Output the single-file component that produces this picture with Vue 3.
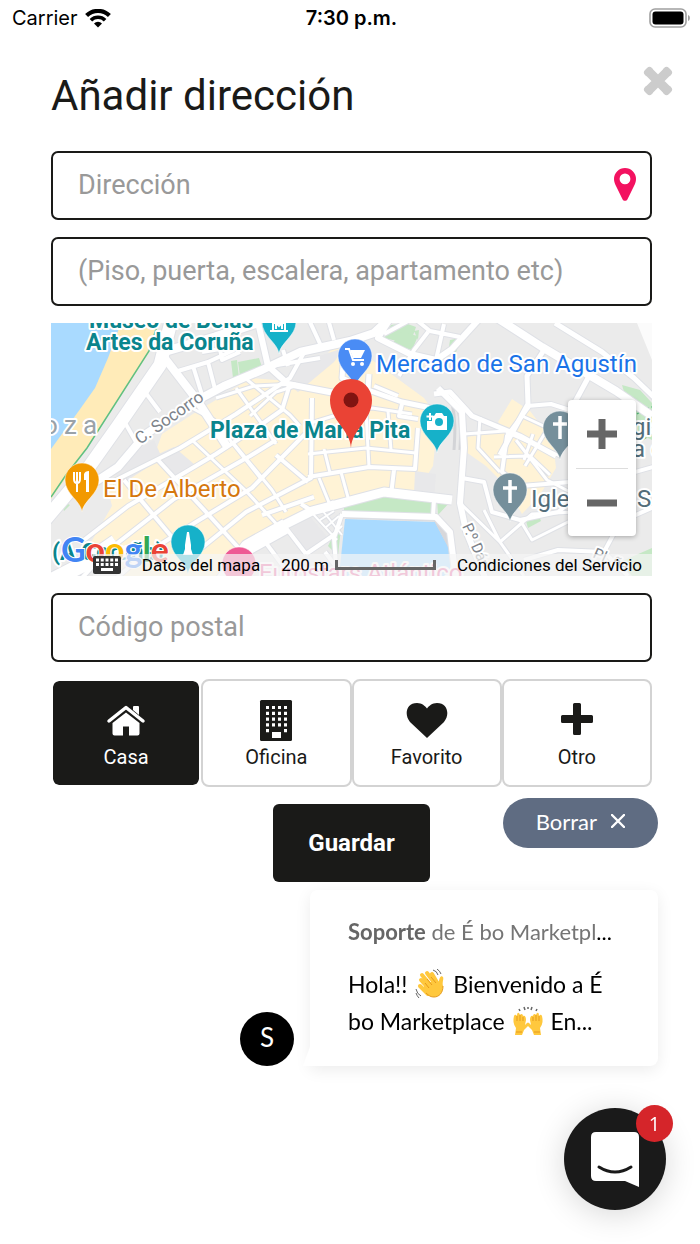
<script setup>
import { ref } from "vue";

const address = ref("");
const details = ref("");
const postcode = ref("");
const selected = ref("casa");
const showMessage = ref(true);

const types = [
  { id: "casa", label: "Casa" },
  { id: "oficina", label: "Oficina" },
  { id: "favorito", label: "Favorito" },
  { id: "otro", label: "Otro" },
];

// streets of the map, w is the width of the white part
const roads = [
  { w: 13, d: "M172 318L160 365L118 426L84 474L45 520" },
  { w: 9, d: "M163 352L215 337L260 322" },
  { w: 8, d: "M160 352L197 400L228 448" },
  { w: 8, d: "M80 492L118 467L146 434L194 402L224 386L262 370L300 352L350 341L374 333L392 316" },
  { w: 4, d: "M142 388L160 412M124 421L136 442" },
  { w: 4, d: "M178 371L208 362L234 350M193 366L203 398M208 362L215 389M202 352L220 349L222 360L240 352" },
  { w: 6, d: "M257 318L268 366L288 384L345 395" },
  { w: 4, d: "M283 350L288 366M277 365L320 358M310 322L322 348M328 319L334 340" },
  { w: 4, d: "M112 482L180 448L236 414L290 378L306 349" },
  { w: 3, d: "M236 388L262 424L276 444M245 378L290 415L300 426" },
  { w: 3, d: "M188 406L214 420L238 450L262 480" },
  { w: 3, d: "M216 398L254 386L296 384M250 416L276 392L295 386" },
  { w: 4, d: "M290 384L282 410L262 424L216 454L128 506L84 540" },
  { w: 4, d: "M276 440L250 456L174 499L106 552L80 580" },
  { w: 4, d: "M305 434L252 488L196 522L142 556L112 582" },
  { w: 4, d: "M158 460L206 512L246 556M124 480L166 530L196 566" },
  { w: 3, d: "M192 440L246 491L282 530M234 444L272 490L286 512" },
  { w: 4, d: "M312 398L311 478L246 512L198 551M276 455L308 482" },
  { w: 3, d: "M304 425L340 414L372 408L412 414M308 454L366 448L416 453" },
  { w: 3, d: "M324 449L330 473M366 412L369 467M388 411L391 450" },
  { w: 4, d: "M308 477L369 467L415 469L418 428M394 470L391 495" },
  { w: 3, d: "M319 478L330 505M341 472L349 501M342 382L342 414" },
  { w: 5, d: "M344 352L342 378L368 390L402 402L431 408M369 374L368 390" },
  { w: 4, d: "M402 404L399 416L418 419M374 386L398 396" },
  { w: 15, d: "M45 584L84 564L116 542M216 590L248 547L286 526" },
  { w: 9, d: "M278 528L312 511L384 492L452 500" },
  { w: 4, d: "M301 504L312 511L334 502M262 515L314 497M286 528L306 554M306 554L334 535M325 552L340 572M266 543L292 578" },
  { w: 2, d: "M313 514L337 540M322 510L342 535M320 520L334 511M325 528L339 516M331 536L342 526" },
  { w: 6, d: "M342 514L436 517L450 532L456 580" },
  { w: 4, d: "M342 514L334 538L337 580M434 500L433 517" },
  { w: 6, d: "M392 316L378 338L410 354L436 360L452 349L482 316" },
  { w: 4, d: "M384 334L408 321M414 318L430 331L460 337M428 332L414 350L399 376M444 324L436 360" },
  { w: 8, d: "M494 316L542 347L616 391L652 416" },
  { w: 5, d: "M555 323L602 352L634 378L659 402M544 350L527 376L528 404L500 455" },
  { w: 5, d: "M588 378L575 402M434 394L450 392L472 416L520 436L556 456" },
  { w: 6, d: "M438 388L462 412L464 448L460 503L466 531L486 580" },
  { w: 4, d: "M527 406L551 404L576 412M530 405L507 436L502 472L521 486L570 482" },
  { w: 3, d: "M480 417L478 448L500 472M464 434L505 431M506 432L560 456M520 415L548 428L525 466M494 457L530 456L550 475M516 440L547 480L574 494M533 434L524 460" },
  { w: 4, d: "M462 478L484 482L492 512L520 520L558 512L596 483L660 465" },
  { w: 3, d: "M484 510L500 542L532 514L576 512M460 503L500 542L524 576M520 520L532 540L580 516" },
  { w: 4, d: "M524 560L558 550L604 552L628 576M604 552L620 522L656 506M600 483L612 518" },
];

const pin = "M0 0C-1-11-17-18-17-32a17 17 0 0 1 34 0C17-18 1-11 0 0Z";
</script>

<template>
  <header class="status">
    <div class="carrier">
      Carrier
      <svg width="26" height="19" viewBox="0 0 26 19" aria-hidden="true">
        <path d="M1.600 6.600a16.200 16.200 0 0 1 22.800 0" fill="none" stroke="#000" stroke-width="4.200" />
        <path d="M5.900 11.200a10.100 10.100 0 0 1 14.200 0" fill="none" stroke="#000" stroke-width="3.600" />
        <path d="M9 14.400a5.700 5.700 0 0 1 8 0l-4 4z" />
      </svg>
    </div>
    <div class="time">7:30 p.m.</div>
    <svg class="battery" width="42" height="20" viewBox="0 0 42 20" aria-hidden="true">
      <rect x="1" y="1" width="36" height="18" rx="5" fill="#fff" stroke="#a0a0a0" stroke-width="1.600" />
      <rect x="3.500" y="3.500" width="31" height="13" rx="3" />
      <path d="M39 7c2.500.5 2.500 5.500 0 6z" fill="#a0a0a0" />
    </svg>
  </header>

  <main class="page">
    <div class="heading">
      <h1>Añadir dirección</h1>
      <button class="close" type="button" aria-label="Cerrar">
        <svg width="30" height="30" viewBox="0 0 30 30">
          <path d="M5.500 5.500l19 19M24.500 5.500l-19 19" stroke="#ccc" stroke-width="9.500" />
          <path d="M4.500 6.500l2-2M23.500 4.500l2 2M4.500 23.500l2 2M23.500 25.500l2-2" stroke="#ccc" stroke-width="7" stroke-linecap="round" />
        </svg>
      </button>
    </div>

    <form class="form" @submit.prevent>
      <div class="field">
        <input v-model="address" type="text" placeholder="Dirección" aria-label="Dirección" />
        <svg width="22" height="33" viewBox="0 0 22 33" aria-hidden="true">
          <path
            d="M11 0a11 11 0 0 1 11 11c0 3-1 4.800-2 7l-6.500 13.200c-1 2-4 2-5 0L2 18c-1-2.200-2-4-2-7A11 11 0 0 1 11 0zm0 5.500a5.400 5.400 0 1 0 0 10.800 5.400 5.400 0 0 0 0-10.800z"
            fill="#f31260"
          />
        </svg>
      </div>
      <div class="field">
        <input
          v-model="details"
          type="text"
          placeholder="(Piso, puerta, escalera, apartamento etc)"
          aria-label="(Piso, puerta, escalera, apartamento etc)"
        />
      </div>

      <div class="map">
        <svg class="canvas" viewBox="51 323 601 253" preserveAspectRatio="xMidYMid slice">
          <rect x="51" y="323" width="601" height="253" fill="#ebebeb" />
          <path d="M51 323H158L150 351L88 447L51 499z" fill="#ffebb8" />
          <path d="M51 323H121L108 358L95 388L78 412L51 449z" fill="#a9daff" />
          <path d="M158 323L149 351L87 448L66 475L51 497" fill="none" stroke="#5fc083" stroke-width="1.500" />

          <g fill="#fff3d6">
            <path d="M162 434L196 412L224 395L250 378L300 382L322 360L336 344L348 350L372 360L424 398L438 418L433 466L418 490L382 491L312 508L280 524L244 546L218 576H120L90 544L112 506L106 482L154 456z" />
            <path d="M512 399L530 411L540 424L552 434L556 468L540 495L522 514L506 486L486 466L466 452V437L506 432L498 422z" />
            <path d="M92 532L120 508L134 520L108 548z" />
          </g>
          <g fill="#e8e8ea">
            <path d="M110 466L154 440L162 458L122 484zM288 524L308 514L330 540L306 552zM154 456L174 447L194 464L174 478z" />
            <path d="M300 362L344 348L334 362L298 392L288 384zM415 471L436 474L434 500L414 494z" />
          </g>
          <g fill="#c5e8c5">
            <path d="M231 361L237 360L239 378L233 378zM238 362L259 358L262 367L240 376z" />
            <path d="M391 325L405 323L416 327L410 344L384 338zM414 331L419 330L418 340z" />
            <path d="M401 332L418 336L412 350L392 344zM450 340L462 338L456 352L448 355z" />
            <path d="M344 506L380 496L432 501V515L344 512zM437 500L450 502L438 515z" />
            <path d="M622 385L640 390L652 403V440L636 432zM526 521L538 514L541 521L528 528z" />
            <path d="M328 546L342 518L338 556zM620 562L652 548V576H632zM60 500L70 505L64 511z" />
          </g>
          <path d="M345 519L435 522L450 550V576H339z" fill="#a9daff" />
          <path d="M346 516L436 519L454 553" fill="none" stroke="#d7d7da" stroke-width="5" />
          <path d="M451 394C458 404 462 416 460 450M452 403C456 420 455 434 454 450" fill="none" stroke="#d3d4d7" stroke-width="3" />
          <path d="M637 323H652V360z" fill="#fbfbfb" />
          <path d="M637 414q8-6 15-7M642 440l10-6" stroke="#55b77b" stroke-width="1.500" stroke-dasharray="5 3" fill="none" />

          <g fill="none" stroke-linejoin="round">
            <path v-for="(r, i) in roads" :key="'c' + i" :d="r.d" stroke="#dfe1e6" :stroke-width="r.w + 2" />
            <path v-for="(r, i) in roads" :key="'r' + i" :d="r.d" stroke="#fff" :stroke-width="r.w" />
          </g>

          <!-- street and area names -->
          <g class="names" fill="#7d838a">
            <text transform="translate(140 445) rotate(-35)" font-size="17">C. Socorro</text>
            <text transform="translate(462 526) rotate(66)" font-size="15">P.º Dár</text>
            <text transform="translate(592 557) rotate(24)" font-size="15">Pl. ña</text>
            <text x="43 64 83" y="434" font-size="26" fill="#9aa2a8">oza</text>
          </g>

          <!-- places -->
          <g class="names">
            <g class="strong" fill="#0a858d" font-size="23">
              <text x="89" y="328">Museo de Belas</text>
              <text x="86" y="350">Artes da Coruña</text>
              <text x="210" y="438">Plaza de María Pita</text>
              <text x="52" y="560">(A Coruña)</text>
            </g>
            <text x="376" y="372" font-size="24" fill="#1a73e8">Mercado de San Agustín</text>
            <text x="103" y="497" font-size="24" fill="#d5770d">El De Alberto</text>
            <text x="259" y="581" font-size="24" fill="#e8609a">Eurostars Atlántico</text>
            <g fill="#536d7a" font-size="24">
              <text x="531" y="507">Igle</text>
              <text x="637" y="507">S</text>
              <text x="632" y="435">gia</text>
              <text x="632" y="457">a c</text>
            </g>
          </g>

          <g stroke="#fff" stroke-opacity=".5">
            <path :d="pin" transform="translate(279 354)" fill="#16b1c9" />
            <path :d="pin" transform="translate(355 388)" fill="#4a8cf5" />
            <path :d="pin" transform="translate(437 453)" fill="#16b1c9" />
            <path :d="pin" transform="translate(82 512)" fill="#f29900" />
            <path :d="pin" transform="translate(560 460)" fill="#758f9b" />
            <path :d="pin" transform="translate(510 522)" fill="#758f9b" />
            <path :d="pin" transform="translate(188 574)" fill="#16b1c9" />
            <path :d="pin" transform="translate(239 596)" fill="#ee5a94" />
          </g>
          <g fill="none" stroke="#fff" stroke-width="2">
            <path d="M270 331h18M273 330v-7h12v7M276 329v-6l3 3 3-3v6" />
            <path d="M345 349h4l4 11h11" />
            <path d="M560 416v23M553 424h14M510 480v23M503 488h14" stroke-width="3.500" />
            <path d="M74 472v7q0 4 3 4t3-4v-7M77 472v20" />
            <path d="M430 413v7M426.500 416.500h7" />
          </g>
          <g fill="#fff">
            <path d="M350 350h15l-4 8h-8z" />
            <circle cx="353" cy="364" r="2" />
            <circle cx="362" cy="364" r="2" />
            <path d="M86 492V480h-2v-6q1-3 5-3v21z" />
            <path d="M434 416l2-3h6l2 3h3v14h-20v-9h5v-5z" />
            <path d="M187 532h2l2 13v4l2 6h-10l2-6v-4z" />
          </g>
          <circle cx="439" cy="422" r="4" fill="#16b1c9" />

          <!-- selected position -->
          <path d="M351 448c-1-19-21-27-21-48a21 21 0 0 1 42 0c0 21-20 29-21 48z" fill="#ea4335" />
          <circle cx="351" cy="400" r="7.500" fill="#811411" />

          <text class="google" x="61" y="562" font-size="34">
            <tspan fill="#4285f4">G</tspan><tspan fill="#ea4335">o</tspan><tspan fill="#fbbc05">o</tspan><tspan fill="#4285f4">g</tspan><tspan fill="#34a853">l</tspan><tspan fill="#ea4335">e</tspan>
          </text>
        </svg>

        <div class="zoom">
          <button type="button" aria-label="Acercar">
            <svg width="32" height="32" viewBox="0 0 32 32"><path d="M16 1v30M1 16h30" stroke="#666" stroke-width="7" /></svg>
          </button>
          <button type="button" aria-label="Alejar">
            <svg width="32" height="32" viewBox="0 0 32 32"><path d="M1 16h30" stroke="#666" stroke-width="7" /></svg>
          </button>
        </div>

        <div class="legal">
          <button class="keyboard" type="button" aria-label="Combinaciones de teclas">
            <svg width="28" height="18" viewBox="0 0 28 18">
              <rect width="28" height="18" rx="2" fill="#333" />
              <path d="M3 4h22M3 8.500h22" stroke="#fff" stroke-width="3" stroke-dasharray="3 1.750" />
              <path d="M8 13.500h12" stroke="#fff" stroke-width="3" />
            </svg>
          </button>
          <span>Datos del mapa</span>
          <span class="scale">
            200 m
            <svg width="101" height="10" viewBox="0 0 101 10"><path d="M1.500 0v8.500h98V0" fill="none" stroke="#666" stroke-width="3" /></svg>
          </span>
          <a href="#">Condiciones del Servicio</a>
        </div>
      </div>

      <div class="field">
        <input v-model="postcode" type="text" placeholder="Código postal" aria-label="Código postal" />
      </div>

      <div class="types">
        <button
          v-for="t in types"
          :key="t.id"
          type="button"
          :class="{ active: selected === t.id }"
          :aria-pressed="selected === t.id"
          @click="selected = t.id"
        >
          <svg width="42" height="42" viewBox="0 0 42 42" aria-hidden="true" fill="currentColor">
            <template v-if="t.id === 'casa'">
              <path d="M28 8.500V7q0-1 1-1h4q1 0 1 1v8l-6-5z" />
              <path d="M4 21L21 7.500 38 21" fill="none" stroke="currentColor" stroke-width="3.500" stroke-linecap="round" stroke-linejoin="round" />
              <path d="M21 12.500L34.500 23v10.500q0 2-2 2H24v-9h-6v9H9.500q-2 0-2-2V23z" />
            </template>
            <template v-else-if="t.id === 'oficina'">
              <rect x="5" y="0" width="32" height="41" rx="1.500" />
              <path
                d="M11 7.500h21M11 13.300h21M11 19.100h21M11 24.900h21M11 30.700h3M29 30.700h3"
                fill="none"
                stroke="#fff"
                stroke-width="3.200"
                stroke-dasharray="3 3"
              />
              <rect x="17" y="32" width="9" height="6" fill="#fff" />
            </template>
            <path
              v-else-if="t.id === 'favorito'"
              d="M21 38L4 22C-2 15 0 3 11 3c5 0 8 3 10 5.500C23 6 26 3 31 3c11 0 13 12 7 19z"
            />
            <path
              v-else
              d="M18.500 3h5q1.500 0 1.500 1.500V15h10.500q1.500 0 1.500 1.500v5q0 1.500-1.500 1.500H25v10.500q0 1.500-1.500 1.500h-5q-1.500 0-1.500-1.500V23H6.500Q5 23 5 21.500v-5Q5 15 6.500 15H17V4.500Q17 3 18.500 3z"
            />
          </svg>
          <span>{{ t.label }}</span>
        </button>
      </div>

      <button class="save" type="submit">Guardar</button>
    </form>
  </main>

  <aside v-if="showMessage" class="messenger">
    <button class="clear" type="button" @click="showMessage = false">
      Borrar
      <svg width="14" height="14" viewBox="0 0 14 14" aria-hidden="true">
        <path d="M1 1l12 12M13 1L1 13" stroke="#fff" stroke-width="2.400" stroke-linecap="round" />
      </svg>
    </button>
    <div class="row">
      <div class="avatar">S</div>
      <div class="card">
        <p class="from"><span><b>Soporte</b> de É bo Marketpl</span>...</p>
        <p class="body">
          Hola!!
          <svg width="30" height="30" viewBox="0 0 30 30" role="img" aria-label="Saludo">
            <g fill="none" stroke="#ffc83d" stroke-width="4" stroke-linecap="round">
              <path d="M6 11l9 10M7 6l10 12M12 4l9 12M17 5l6 10" />
              <path d="M5 17l8 8" />
            </g>
            <path d="M9 17l12-7 3 3c0-4 2-7 4-5 1 2-1 5 0 9 0 7-4 11-9 11-4 0-7-3-11-7z" fill="#ffc83d" />
            <path d="M10 14l4 5M12 10l5 6M16 8l5 6M28 17c0 7-4 11-9 11-3 0-5-1-8-4" fill="none" stroke="#e59a1c" />
            <path d="M18 1q4 1 5 5M22 0q3 2 4 5M1 20q1 5 5 7M1 24q1 3 3 5" fill="none" stroke="#666" />
          </svg>
          Bienvenido a É<br />
          bo Marketplace
          <svg width="30" height="30" viewBox="0 0 30 30" role="img" aria-label="Manos alzadas">
            <g fill="#ffc83d">
              <path d="M2 29l1-7c-3-4-3-8-2-12 1-2 2-1 3 0 0-4 2-4 3-1 1-2 3-1 3 1 2-1 3 1 3 4l-1 5 2-2c2-1 2 1 1 3l-4 4-2 5z" />
              <path d="M28 29l-1-7c3-4 3-8 2-12-1-2-2-1-3 0 0-4-2-4-3-1-1-2-3-1-3 1-2-1-3 1-3 4l1 5-2-2c-2-1-2 1-1 3l4 4 2 5z" />
            </g>
            <path d="M4 10v5M7 9v6M10 11v4M26 10v5M23 9v6M20 11v4M3 26h6M21 26h6" stroke="#e59a1c" fill="none" />
            <path d="M6 3l1 2M11 1l1 3M15 1v2M19 1l-1 3M24 3l-1 2" stroke="#666" stroke-width="1.500" fill="none" />
          </svg>
          En...
        </p>
      </div>
    </div>
  </aside>

  <button class="launcher" type="button" aria-label="Abrir chat">
    <svg width="48" height="56" viewBox="0 0 48 56">
      <path d="M5 1h38q5 0 5 5v50l-14-6H5q-5 0-5-5V6q0-5 5-5z" fill="#fff" />
      <path d="M8 36q16 10 32 0" fill="none" stroke="#1a1a1a" stroke-width="3" stroke-linecap="round" />
    </svg>
    <span class="badge">1</span>
  </button>
</template>

<style>
body {
  margin: 0;
  background: #fff;
}
</style>

<style scoped>
* {
  box-sizing: border-box;
}
button,
input {
  font-family: inherit;
  margin: 0;
}
button {
  cursor: pointer;
  border: none;
  padding: 0;
}
svg {
  display: block;
}
.status {
  display: grid;
  grid-template-columns: 1fr auto 1fr;
  align-items: center;
  height: 36px;
  padding: 0 9px 0 12px;
  font-family: Inter, "Liberation Sans", sans-serif;
  font-size: 20px;
  color: #000;
}
.carrier {
  display: flex;
  align-items: center;
  gap: 7px;
}
.time {
  font-weight: 600;
}
.battery {
  justify-self: end;
}
.page {
  padding: 0 48px 40px 51px;
  font-family: Roboto, "Liberation Sans", sans-serif;
  color: #1a1a18;
}
.heading {
  position: relative;
  display: flex;
  align-items: center;
  height: 115px;
  padding-top: 4px;
}
h1 {
  margin: 0;
  font-size: 42px;
  font-weight: 400;
}
.close {
  position: absolute;
  top: 30px;
  right: -21px;
  background: none;
}
.form {
  display: flex;
  flex-direction: column;
  gap: 17px;
}
.field {
  position: relative;
}
.field input {
  display: block;
  width: 100%;
  height: 69px;
  padding: 0 60px 1px 25px;
  border: 2px solid #1a1a18;
  border-radius: 7px;
  background: #fff;
  font-size: 27px;
  color: #1a1a18;
  outline: none;
}
.field input::placeholder {
  color: #999;
  opacity: 1;
}
.field svg {
  position: absolute;
  top: 17px;
  right: 16px;
}
.map {
  position: relative;
  overflow: hidden;
}
.canvas {
  width: 100%;
}
.names text {
  font-weight: 400;
  stroke: #fff;
  stroke-width: 4px;
  stroke-linejoin: round;
  paint-order: stroke;
}
.names .strong text {
  font-weight: 700;
}
.google {
  font-family: Lato, sans-serif;
  font-weight: 700;
  stroke: #fff;
  stroke-width: 2px;
  paint-order: stroke;
}
.zoom {
  position: absolute;
  right: 16px;
  bottom: 40px;
  width: 68px;
  padding: 0 8px;
  border-radius: 4px;
  background: #fff;
  box-shadow: 0 1px 5px rgba(0, 0, 0, 0.3);
}
.zoom button {
  display: flex;
  align-items: center;
  justify-content: center;
  width: 100%;
  height: 68px;
  background: none;
}
.zoom button + button {
  border-top: 1px solid #ddd;
}
.legal {
  position: absolute;
  right: 0;
  bottom: 0;
  display: flex;
  align-items: center;
  gap: 21px;
  height: 22px;
  padding: 0 10px 0 0;
  background: rgba(245, 245, 245, 0.7);
  font-size: 17px;
  color: #000;
  white-space: nowrap;
}
.legal a {
  color: inherit;
  text-decoration: none;
}
.keyboard {
  background: none;
}
.scale {
  display: flex;
  align-items: center;
  gap: 6px;
}
.types {
  display: grid;
  grid-template-columns: repeat(4, 1fr);
}
.types button {
  display: flex;
  flex-direction: column;
  align-items: center;
  gap: 3px;
  height: 108px;
  padding-top: 19px;
  border: 2px solid #d3d3d3;
  border-radius: 8px;
  background: #fff;
  color: #1a1a18;
  font-size: 20px;
}
.types button.active {
  border-color: #fff;
  background: #1a1a18;
  background-clip: padding-box;
  color: #fff;
}
.save {
  align-self: center;
  height: 78px;
  padding: 0 35px;
  border-radius: 6px;
  background: #1a1a18;
  color: #fff;
  font-size: 24px;
  font-weight: 700;
}
.messenger {
  position: fixed;
  right: 42px;
  bottom: 178px;
  display: flex;
  flex-direction: column;
  align-items: flex-end;
  gap: 42px;
  font-family: Lato, "Open Sans", sans-serif;
}
.clear {
  display: flex;
  align-items: center;
  gap: 14px;
  height: 50px;
  padding: 0 33px 4px;
  border-radius: 25px;
  background: #5f6c82;
  color: #fff;
  font-size: 22px;
}
.row {
  display: flex;
  align-items: flex-end;
  gap: 16px;
}
.avatar {
  display: flex;
  align-items: center;
  justify-content: center;
  width: 54px;
  height: 54px;
  padding-bottom: 4px;
  border-radius: 50%;
  background: #000;
  color: #fff;
  font-size: 26px;
}
.card {
  position: relative;
  width: 348px;
  padding: 26px 38px;
  border-radius: 8px 8px 8px 0;
  background: #fff;
  box-shadow: 0 4px 16px rgba(0, 0, 0, 0.08);
  color: #000;
}
.card::before {
  content: "";
  position: absolute;
  left: -7px;
  bottom: 0;
  width: 8px;
  height: 22px;
  background: #fff;
  clip-path: polygon(100% 0, 100% 100%, 0 100%);
}
.card p {
  margin: 0;
  white-space: nowrap;
}
.from {
  font-size: 22px;
  line-height: 32px;
}
.from span {
  color: #757575;
}
.from b {
  color: #666;
}
.card .body {
  margin-top: 18px;
  font-size: 23px;
  line-height: 37px;
}
.body svg {
  display: inline-block;
  margin: 0 2px;
  vertical-align: -6px;
}
.launcher {
  position: fixed;
  right: 34px;
  bottom: 34px;
  display: flex;
  align-items: center;
  justify-content: center;
  width: 102px;
  height: 102px;
  border-radius: 50%;
  background: #1a1a1a;
  box-shadow: 0 4px 32px rgba(0, 0, 0, 0.16);
}
.badge {
  position: absolute;
  top: -3px;
  right: -7px;
  width: 37px;
  height: 37px;
  border-radius: 50%;
  background: #d5252a;
  color: #fff;
  font-family: "Open Sans", sans-serif;
  font-size: 20px;
  line-height: 37px;
  text-align: center;
}
</style>
